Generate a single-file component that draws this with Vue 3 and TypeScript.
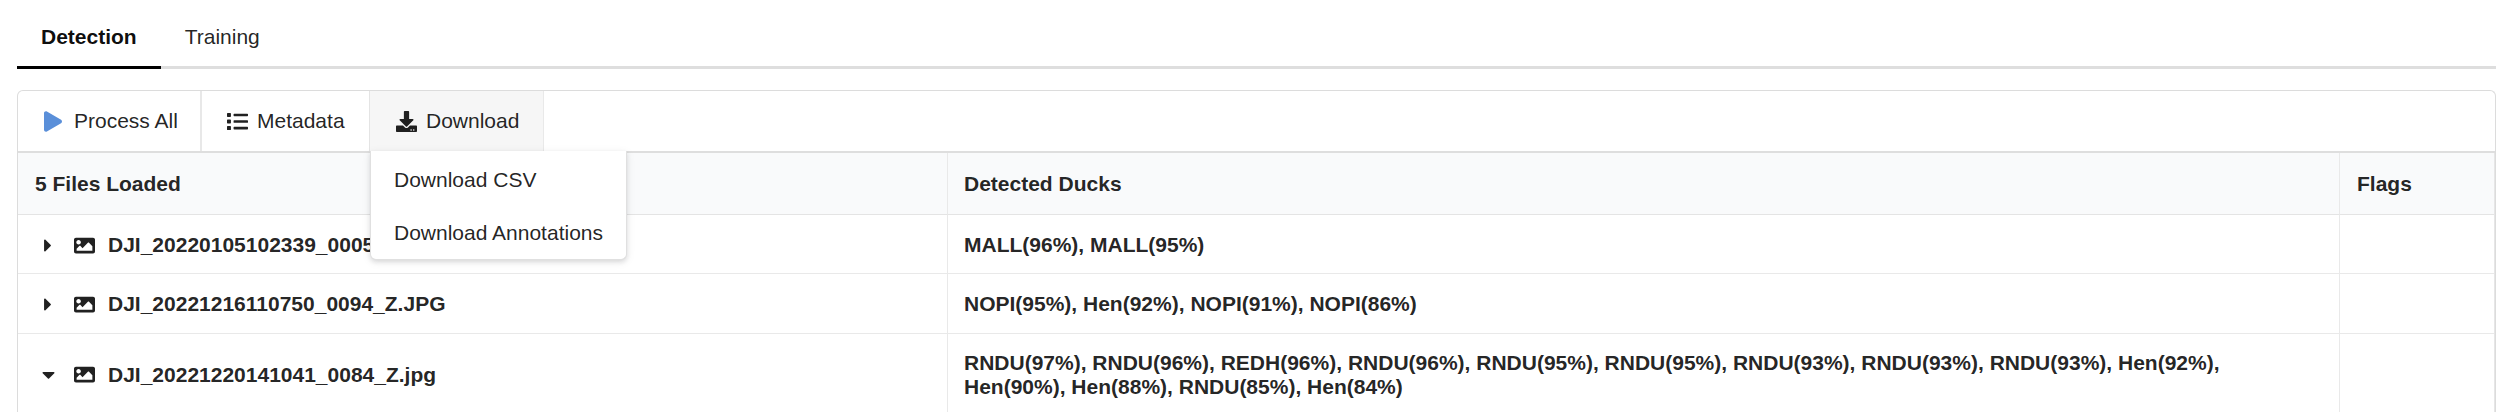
<script setup lang="ts">
interface Row { name: string; ducks: string[]; open?: boolean }
const rows: Row[] = [
  { name: 'DJI_20220105102339_0005_Z.JPG', ducks: ['MALL(96%), MALL(95%)'] },
  { name: 'DJI_20221216110750_0094_Z.JPG', ducks: ['NOPI(95%), Hen(92%), NOPI(91%), NOPI(86%)'] },
  {
    name: 'DJI_20221220141041_0084_Z.jpg',
    open: true,
    ducks: [
      'RNDU(97%), RNDU(96%), REDH(96%), RNDU(96%), RNDU(95%), RNDU(95%), RNDU(93%), RNDU(93%), RNDU(93%), Hen(92%),',
      'Hen(90%), Hen(88%), RNDU(85%), Hen(84%)',
    ],
  },
]
</script>

<template>
  <div class="page">
    <nav class="tabs">
      <a class="tab active">Detection</a>
      <a class="tab">Training</a>
    </nav>
    <section class="card">
      <div class="toolbar">
        <div class="tool tool-process">
          <svg class="ic-play" viewBox="0 0 448 512"><path d="M424.4 214.7L72.4 6.6C43.8-10.3 0 6.1 0 47.9V464c0 37.5 40.7 60.1 72.4 41.3l352-208c31.4-18.5 31.5-64.1 0-82.6z" /></svg>
          Process All
        </div>
        <div class="tool tool-meta">
          <svg class="ic-list" viewBox="0 0 512 512"><path d="M80 368H16a16 16 0 0 0-16 16v64a16 16 0 0 0 16 16h64a16 16 0 0 0 16-16v-64a16 16 0 0 0-16-16zm0-320H16A16 16 0 0 0 0 64v64a16 16 0 0 0 16 16h64a16 16 0 0 0 16-16V64a16 16 0 0 0-16-16zm0 160H16a16 16 0 0 0-16 16v64a16 16 0 0 0 16 16h64a16 16 0 0 0 16-16v-64a16 16 0 0 0-16-16zm416 176H176a16 16 0 0 0-16 16v32a16 16 0 0 0 16 16h320a16 16 0 0 0 16-16v-32a16 16 0 0 0-16-16zm0-320H176a16 16 0 0 0-16 16v32a16 16 0 0 0 16 16h320a16 16 0 0 0 16-16V80a16 16 0 0 0-16-16zm0 160H176a16 16 0 0 0-16 16v32a16 16 0 0 0 16 16h320a16 16 0 0 0 16-16v-32a16 16 0 0 0-16-16z" /></svg>
          Metadata
        </div>
        <div class="tool tool-download">
          <svg class="ic-dl" viewBox="0 0 512 512"><path d="M216 0h80c13.3 0 24 10.7 24 24v168h87.7c17.8 0 26.7 21.5 14.1 34.1L269.7 378.3c-7.5 7.5-19.8 7.5-27.3 0L90.1 226.1c-12.6-12.6-3.7-34.1 14.1-34.1H192V24c0-13.3 10.7-24 24-24zm296 376v112c0 13.3-10.7 24-24 24H24c-13.3 0-24-10.7-24-24V376c0-13.3 10.7-24 24-24h146.7l49 49c20.1 20.1 52.5 20.1 72.6 0l49-49H488c13.3 0 24 10.7 24 24zm-124 88c0-11-9-20-20-20s-20 9-20 20 9 20 20 20 20-9 20-20zm64 0c0-11-9-20-20-20s-20 9-20 20 9 20 20 20 20-9 20-20z" /></svg>
          Download
          <div class="menu">
            <div class="menu-item">Download CSV</div>
            <div class="menu-item">Download Annotations</div>
          </div>
        </div>
      </div>
      <table class="grid">
        <colgroup>
          <col class="c1" />
          <col class="c2" />
          <col />
        </colgroup>
        <thead>
          <tr>
            <th>5 Files Loaded</th>
            <th>Detected Ducks</th>
            <th>Flags</th>
          </tr>
        </thead>
        <tbody>
          <tr v-for="r in rows" :key="r.name">
            <td>
              <div class="file">
                <span class="caret-box">
                  <svg v-if="r.open" class="ic-down" viewBox="0 0 320 512"><path d="M31.3 192h257.3c17.8 0 26.7 21.5 14.1 34.1L174.1 354.8c-7.8 7.8-20.5 7.8-28.3 0L17.2 226.1C4.6 213.5 13.5 192 31.3 192z" /></svg>
                  <svg v-else class="ic-right" viewBox="0 0 192 512"><path d="M0 384.662V127.338c0-17.818 21.543-26.741 34.142-14.142l128.662 128.662c7.81 7.81 7.81 20.474 0 28.284L34.142 398.804C21.543 411.404 0 402.48 0 384.662z" /></svg>
                </span>
                <svg class="ic-img" viewBox="0 0 512 512"><path d="M464 448H48c-26.51 0-48-21.49-48-48V112c0-26.51 21.49-48 48-48h416c26.51 0 48 21.49 48 48v288c0 26.51-21.49 48-48 48zM112 120c-30.928 0-56 25.072-56 56s25.072 56 56 56 56-25.072 56-56-25.072-56-56-56zM64 384h384V272l-87.515-87.515c-4.686-4.686-12.284-4.686-16.971 0L208 320l-55.515-55.515c-4.686-4.686-12.284-4.686-16.971 0L64 336v48z" /></svg>
                <span class="name">{{ r.name }}</span>
              </div>
            </td>
            <td class="ducks">
              <div v-for="line in r.ducks" :key="line">{{ line }}</div>
            </td>
            <td></td>
          </tr>
        </tbody>
      </table>
    </section>
  </div>
</template>

<style scoped>
.page {
  padding: 0 9px 0 17px;
  font-family: "Liberation Sans", Arial, sans-serif;
  font-size: 21px;
  line-height: 24.3px;
  color: rgba(0, 0, 0, 0.87);
}
.tabs {
  display: flex;
  height: 69px;
  box-sizing: border-box;
  border-bottom: 3px solid #dedede;
}
.tab {
  padding: 9px 24px 0;
  height: 69px;
  box-sizing: border-box;
  display: flex;
  align-items: center;
  border-bottom: 3px solid transparent;
}
.tab.active {
  font-weight: 700;
  color: rgba(0, 0, 0, 0.95);
  border-bottom-color: #000;
}
.card {
  margin-top: 21px;
  height: 340px;
  box-sizing: border-box;
  border: 1px solid #dcdcdc;
  border-radius: 6px 6px 0 0;
  border-bottom: 0;
  overflow: visible;
}
.toolbar {
  display: flex;
  height: 60px;
  border-bottom: 2px solid #dedede;
}
.tool {
  position: relative;
  display: flex;
  align-items: center;
  box-sizing: border-box;
  color: rgba(0, 0, 0, 0.87);
}
.tool-process {
  width: 184px;
  padding-left: 26px;
  gap: 12px;
  border-right: 2px solid #e8e8e8;
}
.tool-meta {
  width: 168px;
  padding-left: 25px;
  gap: 9px;
  border-right: 1px solid #e4e4e4;
}
.tool-download {
  width: 174px;
  padding-left: 26px;
  gap: 9px;
  background: #f6f6f6;
  border-right: 1px solid #e9e9e9;
}
.tool svg {
  flex: none;
  fill: rgba(0, 0, 0, 0.87);
}
.ic-play {
  width: 18px;
  height: 21px;
  fill: #5a8fd9 !important;
}
.ic-list,
.ic-dl {
  width: 21px;
  height: 21px;
}
.menu {
  position: absolute;
  left: 0;
  top: 60px;
  z-index: 3;
  width: 257px;
  height: 109px;
  box-sizing: border-box;
  padding-top: 3px;
  background: #fff;
  border: 1px solid #e0e0e0;
  border-top: 0;
  border-radius: 0 0 6px 6px;
  box-shadow: 0 2px 4px rgba(34, 36, 38, 0.12), 0 2px 10px rgba(34, 36, 38, 0.08);
}
.menu-item {
  height: 53px;
  padding-left: 23px;
  display: flex;
  align-items: center;
  white-space: nowrap;
}
.grid {
  width: 100%;
  table-layout: fixed;
  border-collapse: separate;
  border-spacing: 0;
  border-right: 1px solid #e6e6e6;
  box-sizing: border-box;
}
.c1 { width: 929px; }
.c2 { width: 1392px; }
th {
  height: 62px;
  box-sizing: border-box;
  padding: 2px 17px 0 16px;
  text-align: left;
  font-weight: 700;
  background: #f9fafb;
  border-bottom: 1px solid #e4e4e4;
  border-left: 1px solid #e9e9e9;
}
th:first-child {
  border-left: 0;
  padding-left: 17px;
}
th:last-child {
  padding-left: 17px;
}
td:first-child {
  border-left: 0;
}
td {
  padding: 18px 16px 16px;
  font-weight: 700;
  border-bottom: 1px solid #e9e9e9;
  border-left: 1px solid #e9e9e9;
  box-sizing: border-box;
  color: rgba(0, 0, 0, 0.87);
}
tr:last-child td {
  padding: 17px 16px;
}
.file {
  display: flex;
  align-items: center;
  padding-left: 10px;
}
.caret-box {
  width: 30px;
  height: 24px;
  flex: none;
  display: flex;
  align-items: center;
}
.ic-right {
  width: 8px;
  height: 21px;
  fill: rgba(0, 0, 0, 0.87);
}
.ic-down {
  width: 13px;
  height: 21px;
  fill: rgba(0, 0, 0, 0.87);
  margin-left: -2px;
}
.ic-img {
  width: 21px;
  height: 21px;
  flex: none;
  margin-right: 13px;
  fill: rgba(0, 0, 0, 0.87);
}
.name {
  white-space: nowrap;
}
</style>

<style>
html,
body {
  margin: 0;
  overflow: hidden;
  background: #fff;
}
</style>
